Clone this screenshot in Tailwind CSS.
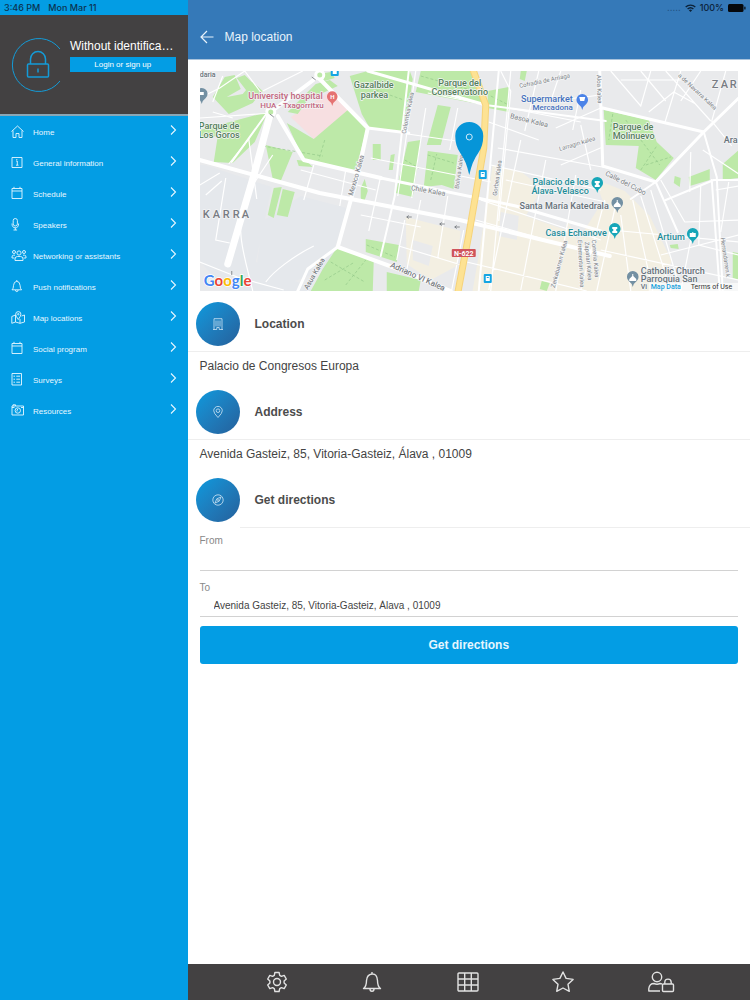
<!DOCTYPE html>
<html lang="en">
<head>
<meta charset="utf-8">
<meta name="viewport" content="width=device-width, initial-scale=1">
<title>Map location</title>
<script src="https://cdn.jsdelivr.net/npm/@tailwindcss/browser@4"></script>
</head>
<body class="flex min-h-screen bg-white font-['Liberation_Sans',Arial,sans-serif] text-[#444]">

<svg class="hidden" aria-hidden="true"><symbol id="chevron" viewBox="0 0 8 10"><path d="m2 .5 4.500 4.500L2 9.500" fill="none" stroke="currentColor" stroke-width="1.100"/></symbol></svg>

<aside class="flex w-1/4 shrink-0 flex-col bg-[#039de4] text-white">
  <div class="flex h-[15px] items-center gap-2 px-1 font-['Inter',sans-serif] text-[9px] font-medium text-[#0b3350]">
    <span>3:46 PM</span><span>Mon Mar 11</span>
  </div>
  <div class="flex h-[101px] items-center gap-2 border-b-2 border-[#8aa7b6] bg-[#434142] pl-[10px] pr-3">
    <svg class="h-14 w-[52px] shrink-0" viewBox="0 0 52 56" fill="none" stroke="#149bd7" aria-hidden="true">
      <path d="M50 12A26.500 26.500 0 1 0 50 44" stroke-width="1"/>
      <rect x="17.500" y="27" width="21" height="13" rx="1" stroke-width="1.500"/>
      <path d="M20.500 27v-5a7.500 7.500 0 0 1 15 0v5" stroke-width="1.500"/>
      <path d="M28 31.500v4" stroke-width="1.500"/>
    </svg>
    <div class="flex min-w-0 flex-1 flex-col gap-[3px] pb-5">
      <p class="whitespace-nowrap text-[12px] leading-[16px]">Without identifica…</p>
      <button class="h-[15px] w-full bg-[#039de4] text-[8px] leading-[15px]" type="button">Login or sign up</button>
    </div>
  </div>
  <nav aria-label="Main menu">
    <ul class="text-[8px] text-[#e8f7ff]">
      <li><a href="#home" class="flex h-[31px] items-center pl-[10px] pr-[11px]">
        <svg class="h-4 w-4" viewBox="0 0 16 16" fill="none" stroke="currentColor" stroke-width="0.900" aria-hidden="true"><path d="M1.500 7.500 7.500 2l6 5.500M3 6.500v7h3v-4h3v4h3v-7"/></svg>
        <span class="ml-[7px] flex-1 pt-[3px]">Home</span>
        <svg class="mb-1 h-[10px] w-2" aria-hidden="true"><use href="#chevron"/></svg></a></li>
      <li><a href="#info" class="flex h-[31px] items-center pl-[10px] pr-[11px]">
        <svg class="h-4 w-4" viewBox="0 0 16 16" fill="none" stroke="currentColor" stroke-width="0.900" aria-hidden="true"><path d="M2 2.500h10v10H2zM6 6h1.300v4M6 10.200h2.500M6.800 4v1"/></svg>
        <span class="ml-[7px] flex-1 pt-[3px]">General information</span>
        <svg class="mb-1 h-[10px] w-2" aria-hidden="true"><use href="#chevron"/></svg></a></li>
      <li><a href="#schedule" class="flex h-[31px] items-center pl-[10px] pr-[11px]">
        <svg class="h-4 w-4" viewBox="0 0 16 16" fill="none" stroke="currentColor" stroke-width="0.900" aria-hidden="true"><path d="M2 2.500h10V12.500H2zM2 5h10M4 .8v1.700M10 .8v1.700"/></svg>
        <span class="ml-[7px] flex-1 pt-[3px]">Schedule</span>
        <svg class="mb-1 h-[10px] w-2" aria-hidden="true"><use href="#chevron"/></svg></a></li>
      <li><a href="#speakers" class="flex h-[31px] items-center pl-[10px] pr-[11px]">
        <svg class="h-4 w-4" viewBox="0 0 16 16" fill="none" stroke="currentColor" stroke-width="0.900" aria-hidden="true"><rect x="3.200" y="1.500" width="4.200" height="7.500" rx="2.100"/><path d="M2 6.500c0 3 1.200 4.300 3.300 4.300s3.300-1.300 3.300-4.300M5.300 10.800V13M3.500 13h3.600"/></svg>
        <span class="ml-[7px] flex-1 pt-[3px]">Speakers</span>
        <svg class="mb-1 h-[10px] w-2" aria-hidden="true"><use href="#chevron"/></svg></a></li>
      <li><a href="#networking" class="flex h-[31px] items-center pl-[10px] pr-[11px]">
        <svg class="h-4 w-[18px]" viewBox="0 0 18 16" fill="none" stroke="currentColor" stroke-width="0.900" aria-hidden="true"><circle cx="9" cy="5" r="2.100"/><circle cx="4" cy="4" r="1.500"/><circle cx="14" cy="4" r="1.500"/><path d="M5 12.500V11q0-2.500 2.500-2.500h3Q13 8.500 13 11v1.500zM5 7.200H3.500Q2 7.200 2 9v1h2.500M13 7.200h1.500Q16 7.200 16 9v1h-2.500"/></svg>
        <span class="ml-[5px] flex-1 pt-[3px]">Networking or assistants</span>
        <svg class="mb-1 h-[10px] w-2" aria-hidden="true"><use href="#chevron"/></svg></a></li>
      <li><a href="#push" class="flex h-[31px] items-center pl-[10px] pr-[11px]">
        <svg class="h-4 w-4" viewBox="0 0 16 16" fill="none" stroke="currentColor" stroke-width="0.900" aria-hidden="true"><path d="M2 10.800q1.500-1 1.500-4.300Q3.800 2.500 6.800 2.300q3 .2 3.300 4.200 0 3.300 1.500 4.300zM5.500 11q0 1.600 1.300 1.600T8.100 11M6.800 1v1.300"/></svg>
        <span class="ml-[7px] flex-1 pt-[3px]">Push notifications</span>
        <svg class="mb-1 h-[10px] w-2" aria-hidden="true"><use href="#chevron"/></svg></a></li>
      <li><a href="#maps" class="flex h-[31px] items-center pl-[10px] pr-[11px]">
        <svg class="h-4 w-4" viewBox="0 0 16 16" fill="none" stroke="currentColor" stroke-width="0.900" aria-hidden="true"><path d="M5.500 5 1.800 6.500v6.800L5.500 12l4.500 1.300 4.500-1.300V5l-3 1M5.500 5v7M10 9v4.300"/><path d="M8.300 9.500Q5.700 6 5.700 4.200a2.600 2.600 0 0 1 5.200 0Q10.900 6 8.300 9.500z"/><circle cx="8.300" cy="4.200" r=".7"/></svg>
        <span class="ml-[7px] flex-1 pt-[3px]">Map locations</span>
        <svg class="mb-1 h-[10px] w-2" aria-hidden="true"><use href="#chevron"/></svg></a></li>
      <li><a href="#social" class="flex h-[31px] items-center pl-[10px] pr-[11px]">
        <svg class="h-4 w-4" viewBox="0 0 16 16" fill="none" stroke="currentColor" stroke-width="0.900" aria-hidden="true"><path d="M2 2.500h10V12.500H2zM2 5h10M4 .8v1.700M10 .8v1.700"/></svg>
        <span class="ml-[7px] flex-1 pt-[3px]">Social program</span>
        <svg class="mb-1 h-[10px] w-2" aria-hidden="true"><use href="#chevron"/></svg></a></li>
      <li><a href="#surveys" class="flex h-[31px] items-center pl-[10px] pr-[11px]">
        <svg class="h-4 w-4" viewBox="0 0 16 16" fill="none" stroke="currentColor" stroke-width="0.900" aria-hidden="true"><path d="M2 1.500h9.500v11.500H2zM3.500 4.200H5M3.500 7.200H5M3.500 10.200H5M6.300 4.200H10M6.300 7.200H10M6.300 10.200H10"/></svg>
        <span class="ml-[7px] flex-1 pt-[3px]">Surveys</span>
        <svg class="mb-1 h-[10px] w-2" aria-hidden="true"><use href="#chevron"/></svg></a></li>
      <li><a href="#resources" class="flex h-[31px] items-center pl-[10px] pr-[11px]">
        <svg class="h-4 w-4" viewBox="0 0 16 16" fill="none" stroke="currentColor" stroke-width="0.900" aria-hidden="true"><path d="M2 3h11.500v9H2zM3 3V1.800h2.500V3M2 4.500h2.500M11 4.500h2.500"/><circle cx="7.800" cy="7.500" r="2.700"/><path d="M7 8.500V7l1-1"/></svg>
        <span class="ml-[7px] flex-1 pt-[3px]">Resources</span>
        <svg class="mb-1 h-[10px] w-2" aria-hidden="true"><use href="#chevron"/></svg></a></li>
    </ul>
  </nav>
</aside>

<div class="flex min-w-0 flex-1 flex-col">
  <header class="h-[60px] border-b border-[#a9c3dc] bg-[#3579b8] text-[#e8f3fb]">
    <div class="flex h-[15px] items-center justify-end gap-1 pr-1 font-['Inter',sans-serif] text-[9px] font-medium text-[#0c2238]">
      <span class="text-[#1f4e7d]">.....</span>
      <svg class="h-2 w-[11px]" viewBox="0 0 11 8" fill="none" stroke="currentColor" stroke-width="1.400" aria-hidden="true"><path d="M.7 3a7 7 0 0 1 9.600 0M2.600 5a4.300 4.300 0 0 1 5.800 0"/><path d="M5.500 8 3.900 6.300a2.400 2.400 0 0 1 3.200 0z" fill="currentColor" stroke="none"/></svg>
      <span>100%</span>
      <svg class="h-2 w-[18px]" viewBox="0 0 18 8" fill="#05080c" aria-hidden="true"><rect width="15.500" height="8" rx="1.500"/><rect x="16.300" y="2.500" width="1.200" height="3" rx=".6"/></svg>
    </div>
    <div class="flex h-[44px] items-center gap-[11px] pl-3">
      <button type="button" aria-label="Back"><svg class="h-[14px] w-[14px]" viewBox="0 0 14 14" fill="none" stroke="currentColor" stroke-width="1.200"><path d="M13.500 7H1M7 1 1 7l6 6"/></svg></button>
      <h1 class="text-[12px]">Map location</h1>
    </div>
  </header>

  <main class="flex-1 pt-[11px]">
    <div class="mx-3 h-[220px] overflow-hidden">
      <svg class="h-full w-full" viewBox="199 71 539 220" preserveAspectRatio="xMidYMid slice" font-family="Roboto, sans-serif" role="img" aria-label="Map around Palacio de Congresos Europa">
        <rect x="0" y="0" width="1000" height="400" fill="#e9eaec"/>
        <!-- built-up and commercial ground -->
        <path fill="#e5e8ec" d="M204 165l67 22-16 75 60 29h-90l-26-30v-96zM300 196l46 12-18 60-60 23-14-10 8-60z"/>
        <path fill="#f3efe2" d="M492 165l30 8 35 28 20 40 25-40-8-22 30 12 25 25 22 45-20 46h-60l-50-16-42 16h-30l8-46zM405 217l55 14-4 35-26 14-24-16z"/>
        <path fill="#e9eaec" d="M500 212l18 4-2 24-18-4zM540 190l30 10-5 30-40-14zM412 240l20 6-4 20-16-6z"/>
        <path fill="#f7dfe1" d="M290 117l40-26 18 19-35 29z"/>
        <!-- parks -->
        <g fill="#bde9a8">
          <path d="M212 97l12-20 10-2 6 14-14 8 16-3 10-12 10 9-10 12-24 11zM236 78l8-3 12 12-10 4z"/>
          <path d="M199 130l68-18-13 30-22 21-19-1 4-26-18 2z"/>
          <path d="M287 112l28-28 14-4 8 6-30 14-10 14zM318 74l12-2 4 6-10 3z"/>
          <path d="M286 123l27 16 34-29 19 18-12 45-51-13z"/>
          <path d="M349 76l18-5h42l3 8-8 54-35-5-8-14z"/>
          <path d="M265 145l27 7-12 29-8-2zM296 160l10 1 6 6-14-1zM273 188l8-1-8 31-6-3zM282 189l12 3-7 25-11-2z"/>
          <path d="M336 248l37 13-1 30h-62l12-22zM365 239l33 6-2 17-31-10z"/>
          <path d="M420 71h50l13 34-68-13zM487 91l21-4v25l-21-4zM437 105l13 2-10 38h-14zM407 142l13-2-8 57-17-4zM427 151l30 4-4 34-12-4-18 2z"/>
          <path d="M372 144h8v16h-8zM390 155l4-1-2 16h-4zM360 188l4-9 3 12-4 12-3-5zM386 272l34 8-2 11h-32zM520 71h6l-2 10-5-2z"/>
          <path d="M603 110l45 10 8 22 17 16-18 22-20-12 3-22-33-1zM688 177l21-8v11l-20 6zM674 176l6 2-1 9-6-4zM738 150l-16 14v16l16-2zM669 245l8-1 1 5-8-1zM732 252l6 1v27l-6-2zM541 281l8 2-3 8-7-2z"/>
        </g>
        <g fill="none" stroke="#93c98a" stroke-width=".7" stroke-dasharray="3 2">
          <path d="M262 146l60 10M324 140l-6 20M427 155l26 8M430 180l6-26M404 160l14 8M612 114l-4 26M625 120l34 45M640 170l16-24M645 165l25-8M330 262l34 20M324 280l30-18M345 285l20-25M366 245l28 12M420 76l50 14M375 90l28 10M490 96l16 8"/>
        </g>
        <!-- side streets -->
        <g fill="none" stroke="#fff" stroke-width="1.200">
          <path d="M199 98l20-10 25-17M244 71l18 24M262 91l40-20M222 76l-10 26M199 118l72-5M232 118l-20-6M225 178l-10 62 14 3M205 195l16-14M245 200c-12 30 0 60 7 91M252 185l20-30M313 246c-20 10-40 25-48 36M300 170l75 20M313 165l-10 35M345 170l-6 36M380 176l-12 55M360 215l60 12M199 262l40 16 44 12M199 185l20-12M228 164l20-25 8 60"/>
          <path d="M415 71l-18 125M400 133l83 12M425 108l-14 90M457 108l-8 42M370 158l60 12M447 196l-10 62M420 200l-14 70M404 220l-8 40M430 170l60 12M398 246l66 20M463 230l-12 60M500 71l10 20-12 130M510 71l-20 220M508 108l72 14M488 122l50 18M487 105l-60-12M497 148l110 20M490 165l110 25M505 180l100 22M480 200l120 40M475 220l125 35M466 262l120 29M520 140l-32 150M545 160l-25 130M575 175l-20 116M604 200l-24 90"/>
          <path d="M538 71l-14 60M560 71l-10 30 50-6M580 90l-8 40M555 128l45-20M580 125l10 45M560 165l42-18M610 71l30 35 10-35M640 71l25 30M620 80h60M680 71l-16 52M700 71l-20 30M648 112l25-20 22 12M665 71l45 50M725 71l-14 50 20 25M690 152l-1 40M702 150l36 24M640 196l30 95M650 190l30 101M632 200l20 91M660 180l24 42M700 185l-2 60 40 10M728 182l-8 50M684 222l54-2M610 230l128 12M600 250l138 30M616 200l-20 91M620 215l10 76M660 255l78-20M690 240l-10 51M715 190l23-4"/>
        </g>
        <!-- avenues -->
        <g fill="none" stroke="#fff" stroke-linejoin="round" stroke-linecap="round">
          <path stroke-width="7" d="M270 112l-16 60-27 92"/>
          <path stroke-width="4" d="M199 160l120 33 140 27 150 36M277 116l26 44 77 18M270 112l48-36M318 78l49 50-10 47-20 72 63 23 50 21"/>
          <path stroke-width="3" d="M380 178l135 28 85 25M367 128l41 5M337 247l-30 22-10 22"/>
          <path stroke-width="3" d="M367 71l118 34M599 71l3 95 53 16 48-50 35-34M602 108l101 24"/>
          <path stroke-width="2" d="M485 105l120 16M408 71l-14 125-14 60M703 132l13 45 6 114M655 182l-25 17M655 182l22 50M665 200l48-20h25M711 180l8 111M498 71l-20 220M267 112l-36 50"/>
          <circle cx="270" cy="112" r="4" stroke-width="3" fill="#bde9a8"/>
          <circle cx="319" cy="75" r="4" stroke-width="3" fill="#bde9a8"/>
        </g>
        <!-- N-622 -->
        <path d="M472 69l13 36-2 43-15 87-11 58" fill="none" stroke="#f6d37a" stroke-width="7"/>
        <path d="M472 69l13 36-2 43-15 87-11 58" fill="none" stroke="#fde293" stroke-width="5"/>
        <rect x="451" y="249" width="24" height="8" rx="1" fill="#d0545c"/>
        <text x="463" y="256" font-size="7" font-weight="700" fill="#fff" text-anchor="middle">N-622</text>
        <!-- transit stops -->
        <g fill="#14a5e3"><rect x="478" y="170" width="8" height="9" rx="1"/><rect x="483" y="274" width="8" height="9" rx="1"/><rect x="330" y="70" width="8" height="6" rx="1"/></g>
        <g fill="#fff"><path d="M480 172h4v5h-4zM485 276h4v5h-4zM332 71h4v3h-4z"/></g>
        <g fill="#14a5e3"><path d="M481 173h2v1h-2zM486 277h2v1h-2z"/></g>
        <!-- place pins -->
        <path fill="#e57373" d="M331.500 106q-1-4-4-6a5.300 5.300 0 1 1 8 0q-3 2-4 6z"/>
        <text x="331.500" y="99" font-size="6" font-weight="700" fill="#fff" text-anchor="middle">H</text>
        <path fill="#4b83e8" d="M581.500 110q-1-4-4-6a5.800 5.800 0 1 1 8 0q-3 2-4 6z"/>
        <path fill="#fff" d="M578.500 97h6l-1 4h-4z"/>
        <path fill="#17a6b8" d="M596.500 193q-1-4-4-6a5.800 5.800 0 1 1 8 0q-3 2-4 6zM614 239q-1-4-4-6a5.800 5.800 0 1 1 8 0q-3 2-4 6zM692 244q-1-4-4-6a5.800 5.800 0 1 1 8 0q-3 2-4 6z"/>
        <path fill="#fff" d="M594 181h5v2h-1v2h1v2h-5v-2h1v-2h-1zM611.500 227h5v2h-1v2h1v2h-5v-2h1v-2h-1zM689 233h2l1-1 1 1h2v4h-6z"/>
        <path fill="#7390a3" d="M616.500 213q-1-4-4-6a5.800 5.800 0 1 1 8 0q-3 2-4 6zM632 287q-1-4-4-6a5.800 5.800 0 1 1 8 0q-3 2-4 6zM201 104q-1-4-4-6a5.800 5.800 0 1 1 8 0q-3 2-4 6z"/>
        <path fill="#fff" d="M616 200h1v2l3 3v2h-7v-2l3-3zM631.500 274h1v2l3 3v2h-7v-2l3-3zM199 92h4v3h-4z"/>
        <!-- street names -->
        <g font-size="7" fill="#7b7f85" stroke="#f4f5f6" stroke-width="1.500" paint-order="stroke">
          <text transform="translate(352 196) rotate(-74)">Mexico Kalea</text>
          <text transform="translate(405 134) rotate(-79)" font-size="6">Colombia Kalea</text>
          <text transform="translate(458 189) rotate(-82)" font-size="6">Bolivia Kalea</text>
          <text transform="translate(496 196) rotate(-82)" font-size="6">Gorbea Kalea</text>
          <text transform="translate(410 190) rotate(10)">Chile Kalea</text>
          <text transform="translate(509 118) rotate(14)">Basoa Kalea</text>
          <text transform="translate(519 88) rotate(-12)" font-size="6">Cofradía de Arriaga</text>
          <text transform="translate(559 151) rotate(-17)" font-size="6">Larragin kalea</text>
          <text transform="translate(596 75) rotate(88)" font-size="6">Aloa Kalea</text>
          <text transform="translate(677 76) rotate(43)" font-size="6">a de Navarra Kalea</text>
          <text transform="translate(604 175) rotate(27)">Calle del Cubo</text>
          <text transform="translate(720 238) rotate(82)" font-size="6">Herrandarren k</text>
          <text transform="translate(591 240) rotate(85)" font-size="6">Correria Kalea</text>
          <text transform="translate(584 242) rotate(85)" font-size="6">Zapatari Kalea</text>
          <text transform="translate(577 240) rotate(87)" font-size="6">Errementari Kalea</text>
          <text transform="translate(554 288) rotate(-75)" font-size="6">Zerkabarren Kalea</text>
          <text transform="translate(389 267) rotate(24)" font-size="8" fill="#62666b">Adriano VI Kalea</text>
          <text transform="translate(307 290) rotate(-60)" font-size="7" fill="#62666b">Asua Kalea</text>
        </g>
        <!-- place names -->
        <g font-size="9" font-weight="500" stroke="#f4f5f6" stroke-width="1.500" paint-order="stroke" stroke-linejoin="round">
          <g fill="#c2677f" text-anchor="end"><text x="322" y="99">University hospital</text><text x="323" y="108" font-size="8">HUA - Txagorritxu</text></g>
          <g fill="#55805a">
            <text x="198" y="129">Parque de</text><text x="198" y="138">Los Goros</text>
            <text x="353" y="88">Gazalbide</text><text x="360" y="98">parkea</text>
            <text x="459" y="86" text-anchor="middle">Parque del</text><text x="459" y="95" text-anchor="middle">Conservatorio</text>
            <text x="612" y="130">Parque de</text><text x="612" y="139">Molinuevo</text>
          </g>
          <g fill="#4672bd" text-anchor="end"><text x="572" y="102">Supermarket</text><text x="572" y="110" font-size="8">Mercadona</text></g>
          <g fill="#1e8c98" text-anchor="end"><text x="588" y="185">Palacio de los</text><text x="588" y="194">Álava-Velasco</text><text x="606" y="236">Casa Echanove</text><text x="684" y="240">Artium</text></g>
          <g fill="#68727a"><text x="608" y="209" text-anchor="end">Santa María Katedrala</text><text x="640" y="274">Catholic Church</text><text x="640" y="282">Parroquia San</text><text x="640" y="289" font-size="7">Vi</text><text x="723" y="143">Ara</text><text x="199" y="77" font-size="7">daria</text></g>
          <g fill="#777b82" font-size="11"><text x="202 212 222 232 241" y="218">KARRA</text><text x="711 720 729" y="88">ZAR</text></g>
        </g>
        <g fill="none" stroke="#6f747a" stroke-width=".8"><path d="M406 217h5m-5 0 2-1.500m-2 1.500 2 1.500M439 224h5m-5 0 2-1.500m-2 1.500 2 1.500M454 227h5m-5 0 2-1.500m-2 1.500 2 1.500M269 114l4 3M311 77l4 3M231 271v4"/></g>
        <!-- selected place -->
        <path fill="#0695d8" d="M468.500 175q-3-14-9-22-5-7-5-17a14 14 0 0 1 28 0q0 10-5 17-6 8-9 22z"/>
        <circle cx="468.500" cy="137" r="3" fill="none" stroke="#cfeafa" stroke-width="1"/>
        <!-- attribution -->
        <text x="203" y="286" font-size="15" font-weight="700" stroke="#fff" stroke-width="1.500" paint-order="stroke" font-family="Lato, sans-serif"><tspan fill="#4285f4">G</tspan><tspan fill="#ea4335">o</tspan><tspan fill="#fbbc05">o</tspan><tspan fill="#4285f4">g</tspan><tspan fill="#34a853">l</tspan><tspan fill="#ea4335">e</tspan></text>
        <rect x="648" y="283" width="90" height="8" fill="#fff" fill-opacity=".65"/>
        <text x="650" y="289" font-size="7" font-weight="500" fill="#15a0dc">Map Data</text>
        <text x="690" y="289" font-size="7" fill="#333">Terms of Use</text>
      </svg>
    </div>

    <section class="pt-[11px]">
      <div class="flex items-center gap-[15px] pl-2">
        <div class="flex h-11 w-11 items-center justify-center rounded-full bg-linear-to-br from-[#079ade] to-[#24609b] text-[#cfe6f5]">
          <svg class="h-3 w-3" viewBox="0 0 12 12" fill="none" stroke="currentColor" stroke-width=".8" aria-hidden="true"><path d="M2 11.500V.7h8v10.800M1 11.500h3.800V9.500h2.400v2H11M4 2.500v6M6 2.500v6M8 2.500v6" /></svg>
        </div>
        <h2 class="text-[12px] font-bold text-[#4c4c4c]">Location</h2>
      </div>
      <div class="mt-[5px] border-t border-[#eee]"></div>
      <p class="px-3 pt-[5px] text-[12px] leading-[18px]">Palacio de Congresos Europa</p>
    </section>

    <section class="pt-[15px]">
      <div class="flex items-center gap-[15px] pl-2">
        <div class="flex h-11 w-11 items-center justify-center rounded-full bg-linear-to-br from-[#079ade] to-[#24609b] text-[#cfe6f5]">
          <svg class="h-3 w-3" viewBox="0 0 12 12" fill="none" stroke="currentColor" stroke-width=".8" aria-hidden="true"><path d="M6 11.500Q1.700 7.200 1.700 4.700a4.300 4.300 0 0 1 8.600 0Q10.300 7.200 6 11.500z"/><circle cx="6" cy="4.700" r="1.800"/></svg>
        </div>
        <h2 class="text-[12px] font-bold text-[#4c4c4c]">Address</h2>
      </div>
      <div class="mt-[5px] border-t border-[#eee]"></div>
      <p class="px-3 pt-[5px] text-[12px] leading-[18px]">Avenida Gasteiz, 85, Vitoria-Gasteiz, Álava , 01009</p>
    </section>

    <section class="pt-[15px]">
      <div class="flex items-center gap-[15px] pl-2">
        <div class="flex h-11 w-11 items-center justify-center rounded-full bg-linear-to-br from-[#079ade] to-[#24609b] text-[#cfe6f5]">
          <svg class="h-3 w-3" viewBox="0 0 12 12" fill="none" stroke="currentColor" stroke-width=".8" aria-hidden="true"><circle cx="6" cy="6" r="5.200"/><path d="M9 3 7.200 7.200 3 9l1.800-4.200z"/><circle cx="6" cy="6" r=".5"/></svg>
        </div>
        <h2 class="text-[12px] font-bold text-[#4c4c4c]">Get directions</h2>
      </div>
      <div class="ml-[52px] mt-[5px] border-t border-[#eee]"></div>
      <form class="px-3 pt-[6px]">
        <label for="from" class="block text-[10px] leading-[14px] text-[#888]">From</label>
        <input id="from" type="text" class="block h-[23px] w-full border-b border-[#d2d2d2] px-[14px] text-[10px] outline-none">
        <label for="to" class="mt-[10px] block text-[10px] leading-[14px] text-[#888]">To</label>
        <input id="to" type="text" value="Avenida Gasteiz, 85, Vitoria-Gasteiz, Álava , 01009" class="block h-[22px] w-full border-b border-[#d2d2d2] px-[14px] text-[10px] outline-none">
        <button type="button" class="mt-[9px] h-[38px] w-full rounded-[3px] bg-[#039de4] text-[12px] font-bold text-[#e6f6fe]">Get directions</button>
      </form>
    </section>
  </main>

  <footer class="flex h-9 items-center justify-between bg-[#434142] pl-[77px] pr-[75px] text-[#e2e2e2]">
    <button type="button" aria-label="Settings"><svg class="h-6 w-6" viewBox="0 0 24 24" fill="none" stroke="currentColor" stroke-width="1.400" stroke-linejoin="round"><path d="M9.900 2.500h4.200l.6 2.900 1.700 1 2.800-1 2.100 3.600-2.200 2v2l2.200 2-2.100 3.600-2.800-1-1.700 1-.6 2.900H9.900l-.6-2.900-1.700-1-2.800 1L2.700 15l2.200-2v-2l-2.200-2 2.100-3.600 2.800 1 1.700-1z"/><circle cx="12" cy="12" r="3.500"/></svg></button>
    <button type="button" aria-label="Notifications"><svg class="h-6 w-6" viewBox="0 0 24 24" fill="none" stroke="currentColor" stroke-width="1.400" stroke-linejoin="round"><path d="M3.500 18.500q3-2 3-8Q7 4.500 12 4t5.500 6.500q0 6 3 8zM12 2v2M10 19q0 2.300 2 2.300t2-2.300"/></svg></button>
    <button type="button" aria-label="Grid"><svg class="h-6 w-6" viewBox="0 0 24 24" fill="none" stroke="currentColor" stroke-width="1.400"><rect x="2" y="3" width="20" height="18" rx="1"/><path d="M2 9h20M2 15h20M8.700 3v18M15.300 3v18"/></svg></button>
    <button type="button" aria-label="Favourites"><svg class="h-6 w-6" viewBox="0 0 24 24" fill="none" stroke="currentColor" stroke-width="1.400" stroke-linejoin="round"><path d="m12 2 3.100 6.400 7 1-5.100 4.900 1.300 7L12 18l-6.300 3.300 1.300-7-5.100-4.900 7-1z"/></svg></button>
    <button type="button" aria-label="Account access"><svg class="h-6 w-7" viewBox="0 0 28 24" fill="none" stroke="currentColor" stroke-width="1.400" stroke-linejoin="round"><circle cx="10" cy="7" r="4.700"/><path d="M13 21H1.800v-2.500Q2.500 13.500 7 13.500q3 1.500 6 0 1.300 0 2 .6"/><rect x="15.500" y="14" width="11" height="7.500" rx="1"/><path d="M17.800 14v-1.700a3.200 3.200 0 0 1 6.400 0V14"/></svg></button>
  </footer>
</div>
</body>
</html>
